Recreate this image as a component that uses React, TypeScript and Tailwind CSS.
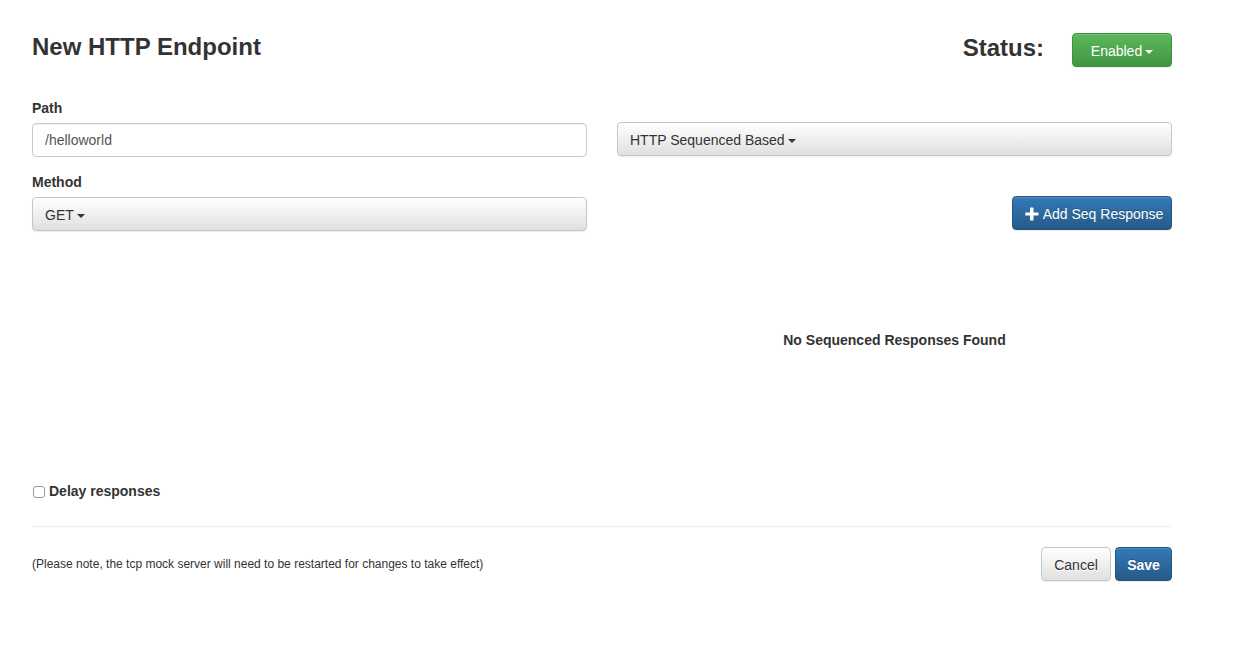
import { useState } from 'react';
import type { ReactNode } from 'react';

const base =
  'h-[34px] rounded border text-sm leading-5 whitespace-nowrap shadow-[inset_0_1px_0_rgba(255,255,255,0.15),0_1px_1px_rgba(0,0,0,0.075)]';
const light =
  'border-[#c6c6c6] bg-linear-to-b from-white to-[#e0e0e0] text-[#333] [text-shadow:0_1px_0_#fff]';
const green =
  'border-[#3e8f3e] bg-linear-to-b from-[#5cb85c] to-[#419641] text-white [text-shadow:0_-1px_0_rgba(0,0,0,0.2)]';
const blue =
  'border-[#245580] bg-linear-to-b from-[#337ab7] to-[#265a88] text-white [text-shadow:0_-1px_0_rgba(0,0,0,0.2)]';

function Caret() {
  return (
    <svg width="8" height="4" viewBox="0 0 8 4" fill="currentColor" aria-hidden="true" className="pointer-events-none mt-1 shrink-0">
      <path d="M0 0h8L4 4z" />
    </svg>
  );
}

type DropdownProps = {
  id: string;
  label?: string;
  options: string[];
  className: string;
};

function Dropdown({ id, label, options, className }: DropdownProps) {
  const [value, setValue] = useState(options[0]);
  return (
    <div className={`${base} ${className} flex items-center gap-[3px] px-3`}>
      <select
        id={id}
        aria-label={label}
        value={value}
        onChange={(e) => setValue(e.target.value)}
        className="field-sizing-content h-full cursor-pointer appearance-none bg-transparent pt-px outline-none"
      >
        {options.map((o) => (
          <option key={o} className="text-[#333]">
            {o}
          </option>
        ))}
      </select>
      <Caret />
    </div>
  );
}

function Button({ className, children }: { className: string; children: ReactNode }) {
  return (
    <button type="button" className={`${base} ${className} flex cursor-pointer items-center justify-center pt-px`}>
      {children}
    </button>
  );
}

export default function App() {
  const [path, setPath] = useState('/helloworld');
  const [delay, setDelay] = useState(false);

  return (
    <main className="min-h-screen bg-white px-8 pt-[33px] font-['Helvetica_Neue',Helvetica,'Liberation_Sans',Arial,sans-serif] text-sm leading-5 text-[#333]">
      <form className="max-w-[1140px]" onSubmit={(e) => e.preventDefault()}>
        <header className="flex items-start justify-between">
          <h1 className="text-2xl leading-7 font-bold">New HTTP Endpoint</h1>
          <div className="flex items-start gap-7">
            <h2 className="text-2xl leading-[30px] font-bold">Status:</h2>
            <Dropdown id="status" label="Status" options={['Enabled', 'Disabled']} className={`${green} w-[100px] justify-center`} />
          </div>
        </header>

        <div className="mt-[31px] grid grid-cols-2 gap-[30px]">
          <div className="flex flex-col">
            <label htmlFor="path" className="mb-[5px] font-bold">
              Path
            </label>
            <input
              id="path"
              type="text"
              value={path}
              onChange={(e) => setPath(e.target.value)}
              className="h-[34px] rounded border border-[#ccc] bg-white px-3 text-[#555] shadow-[inset_0_1px_1px_rgba(0,0,0,0.075)] outline-none focus:border-[#66afe9]"
            />
            <label htmlFor="method" className="mt-[15px] mb-[5px] font-bold">
              Method
            </label>
            <Dropdown id="method" options={['GET', 'POST', 'PUT', 'DELETE', 'PATCH']} className={light} />
          </div>

          <div className="flex flex-col pt-6">
            <Dropdown
              id="type"
              label="Endpoint type"
              options={['HTTP Sequenced Based', 'HTTP Static', 'HTTP Rule Based']}
              className={light}
            />
            <div className="mt-10 flex justify-end">
              <Button className={`${blue} w-40 gap-1 pl-1`}>
                <svg width="14" height="14" viewBox="0 0 14 14" fill="currentColor" aria-hidden="true">
                  <path d="M5.6.5h2.300q.6 0 .6.6V5.500h4.400q.6 0 .6.6v1.800q0 .6-.6.6H8.500v4.400q0 .6-.6.6H5.600q-.6 0-.6-.6V8.500H.9q-.6 0-.6-.6V6.100q0-.6.6-.6H5V1.100q0-.6.6-.6z" />
                </svg>
                Add Seq Response
              </Button>
            </div>
            <p className="mt-[100px] text-center font-bold">No Sequenced Responses Found</p>
          </div>
        </div>

        <div className="mt-[131px] flex items-center gap-1 pl-px">
          <input
            id="delay"
            type="checkbox"
            checked={delay}
            onChange={(e) => setDelay(e.target.checked)}
            className="mt-0.5 size-3 appearance-none rounded-[3px] border border-[#999] bg-white checked:bg-[#337ab7]"
          />
          <label htmlFor="delay" className="font-bold">
            Delay responses
          </label>
        </div>

        <footer className="mt-[25px] flex items-center justify-between border-t border-[#eee] pt-5">
          <p className="text-xs leading-4">
            (Please note, the tcp mock server will need to be restarted for changes to take effect)
          </p>
          <div className="flex gap-1">
            <Button className={`${light} w-[70px]`}>Cancel</Button>
            <Button className={`${blue} w-[57px] font-bold`}>Save</Button>
          </div>
        </footer>
      </form>
    </main>
  );
}
